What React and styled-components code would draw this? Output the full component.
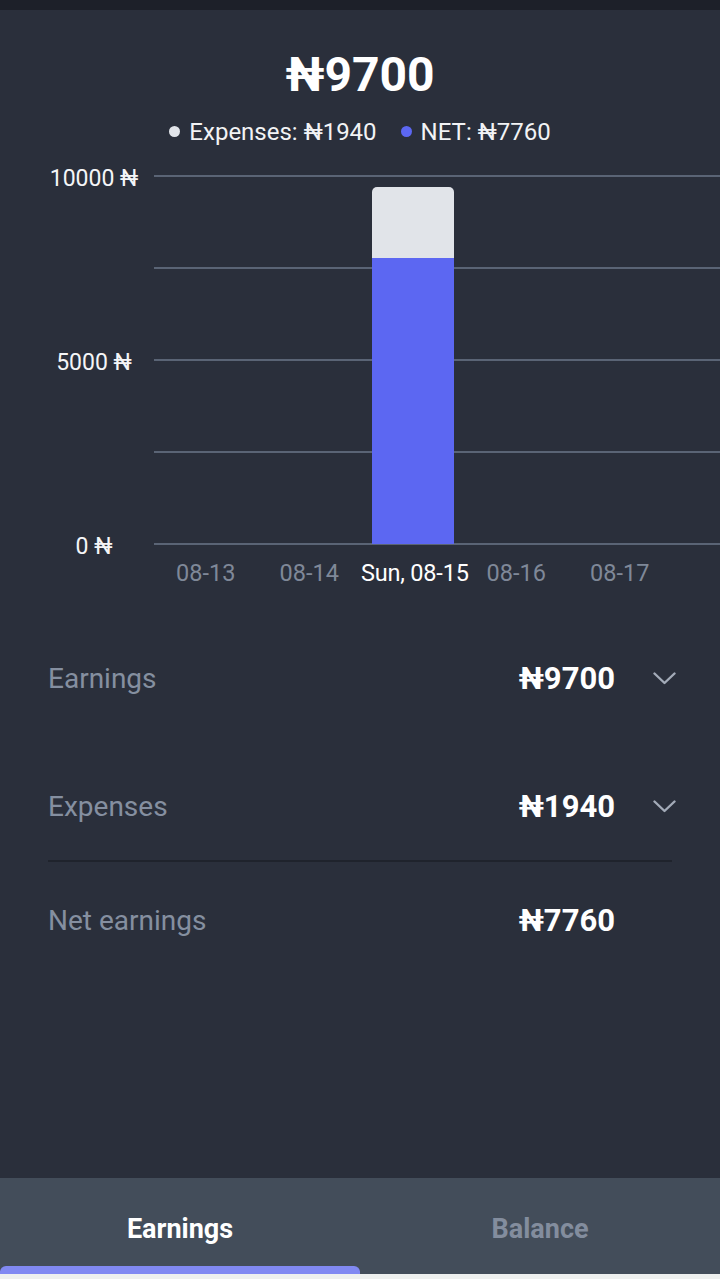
import React from 'react';
import styled, { createGlobalStyle } from 'styled-components';

const GlobalStyle = createGlobalStyle`
  html, body {
    margin: 0;
    padding: 0;
    background: #2a2f3b;
  }
  body {
    font-family: Roboto, "Liberation Sans", Arial, sans-serif;
    -webkit-font-smoothing: antialiased;
  }
`;

const Screen = styled.div`
  min-height: 100vh;
  display: flex;
  flex-direction: column;
  background: #2a2f3b;
  color: #fff;
`;

const StatusStrip = styled.div`
  height: 10px;
  background: #1d2029;
`;

const Total = styled.h1`
  margin: 37px 0 0;
  text-align: center;
  font-size: 48px;
  line-height: 56px;
  font-weight: 700;
  color: #fff;
`;

const Legend = styled.div`
  margin-top: 15px;
  display: flex;
  justify-content: center;
  gap: 24px;
  font-size: 24px;
  line-height: 28px;
  color: #f2f3f5;
`;

const LegendItem = styled.span`
  display: flex;
  align-items: center;
  gap: 9px;
  &::before {
    content: '';
    width: 11px;
    height: 11px;
    border-radius: 50%;
    background: ${p => p.dot};
    margin-top: -2px;
  }
`;

const Chart = styled.div`
  margin-top: 29px;
  display: flex;
`;

const YAxis = styled.div`
  width: 154px;
  box-sizing: border-box;
  padding: 2px 0 0 34px;
  height: 372px;
  display: flex;
  flex-direction: column;
  justify-content: space-between;
`;

const YLabel = styled.div`
  height: 2px;
  display: flex;
  align-items: center;
  justify-content: center;
  white-space: nowrap;
  font-size: 23px;
  color: #f4f5f7;
`;

const PlotWrap = styled.div`
  flex: 1;
  overflow: hidden;
`;

const Plot = styled.div`
  height: 370px;
  display: grid;
  grid-template-columns: repeat(5, 103.5px);
  background: repeating-linear-gradient(
    to bottom,
    #5a6475 0 2px,
    transparent 2px 92px
  );
`;

const Day = styled.div`
  display: flex;
  flex-direction: column;
  justify-content: flex-end;
  align-items: center;
  padding-bottom: 1px;
`;

const Bar = styled.div`
  width: 82px;
  display: flex;
  flex-direction: column;
`;

const Segment = styled.div`
  background: ${p => p.color};
  border-radius: ${p => (p.top ? '5px 5px 0 0' : '0')};
`;

const XAxis = styled.div`
  margin: 12px 0 0 154px;
  display: grid;
  grid-template-columns: repeat(5, 103.5px);
`;

const XLabel = styled.div`
  text-align: center;
  white-space: nowrap;
  font-size: 23.5px;
  line-height: 28px;
  letter-spacing: ${p => (p.active ? '-0.2px' : '0')};
  color: ${p => (p.active ? '#ffffff' : '#7f8898')};
`;

const Summary = styled.div`
  padding: 0 44px 0 48px;
  margin-top: 63px;
  display: flex;
  flex-direction: column;
`;

const Row = styled.div`
  height: 56px;
  display: flex;
  align-items: center;
  margin-top: ${p => p.gap || 0}px;
`;

const RowLabel = styled.div`
  flex: 1;
  font-size: 28px;
  color: #858fa0;
`;

const RowValue = styled.div`
  font-size: 31px;
  font-weight: 700;
  color: #fff;
`;

const ChevronBox = styled.div`
  width: 24px;
  margin-left: 37px;
  display: flex;
  justify-content: center;
  color: #a3abb8;
`;

const Divider = styled.div`
  margin: 26px 4px 0 0;
  height: 2px;
  background: #1f232c;
`;

const Filler = styled.div`
  flex: 1;
`;

const TabBar = styled.nav`
  background: #434d5a;
  display: grid;
  grid-template-columns: 1fr 1fr;
`;

const Tab = styled.div`
  display: flex;
  flex-direction: column;
  align-items: stretch;
  padding-top: 35px;
`;

const TabText = styled.div`
  text-align: center;
  font-size: 27px;
  line-height: 32px;
  font-weight: 700;
  color: ${p => (p.active ? '#ffffff' : '#838d9e')};
`;

const Indicator = styled.div`
  margin-top: 21px;
  height: 8px;
  border-radius: 6px 6px 0 0;
  background: ${p => (p.active ? '#8189f2' : 'transparent')};
`;

const BottomEdge = styled.div`
  height: 5px;
  background: #eef0ef;
`;

const Chevron = () => (
  <svg width="23" height="13" viewBox="0 0 23 13" fill="none">
    <polyline
      points="1.5,1.5 11.5,11 21.5,1.5"
      stroke="currentColor"
      strokeWidth="2.4"
      strokeLinecap="round"
      strokeLinejoin="round"
    />
  </svg>
);

const MAX = 10000;
const PLOT_H = 368;

const days = [
  { label: '08-13' },
  { label: '08-14' },
  { label: 'Sun, 08-15', net: 7760, expenses: 1940, active: true },
  { label: '08-16' },
  { label: '08-17' },
];

const rows = [
  { label: 'Earnings', value: '₦9700', gap: 0, more: true },
  { label: 'Expenses', value: '₦1940', gap: 72, more: true },
];

export default function App() {
  return (
    <Screen>
      <GlobalStyle />
      <StatusStrip />
      <Total>₦9700</Total>
      <Legend>
        <LegendItem dot="#e1e4e9">Expenses: ₦1940</LegendItem>
        <LegendItem dot="#5c67f2">NET: ₦7760</LegendItem>
      </Legend>

      <Chart>
        <YAxis>
          <YLabel>10000 ₦</YLabel>
          <YLabel>5000 ₦</YLabel>
          <YLabel>0 ₦</YLabel>
        </YAxis>
        <PlotWrap>
          <Plot>
            {days.map(d => (
              <Day key={d.label}>
                {d.net && (
                  <Bar>
                    <Segment
                      top
                      color="#e1e4e9"
                      style={{ height: (d.expenses / MAX) * PLOT_H }}
                    />
                    <Segment
                      color="#5c67f2"
                      style={{ height: (d.net / MAX) * PLOT_H }}
                    />
                  </Bar>
                )}
              </Day>
            ))}
          </Plot>
        </PlotWrap>
      </Chart>
      <XAxis>
        {days.map(d => (
          <XLabel key={d.label} active={d.active}>
            {d.label}
          </XLabel>
        ))}
      </XAxis>

      <Summary>
        {rows.map(r => (
          <Row key={r.label} gap={r.gap}>
            <RowLabel>{r.label}</RowLabel>
            <RowValue>{r.value}</RowValue>
            <ChevronBox>{r.more && <Chevron />}</ChevronBox>
          </Row>
        ))}
        <Divider />
        <Row gap={30}>
          <RowLabel>Net earnings</RowLabel>
          <RowValue>₦7760</RowValue>
          <ChevronBox />
        </Row>
      </Summary>

      <Filler />
      <TabBar>
        <Tab>
          <TabText active>Earnings</TabText>
          <Indicator active />
        </Tab>
        <Tab>
          <TabText>Balance</TabText>
          <Indicator />
        </Tab>
      </TabBar>
      <BottomEdge />
    </Screen>
  );
}
